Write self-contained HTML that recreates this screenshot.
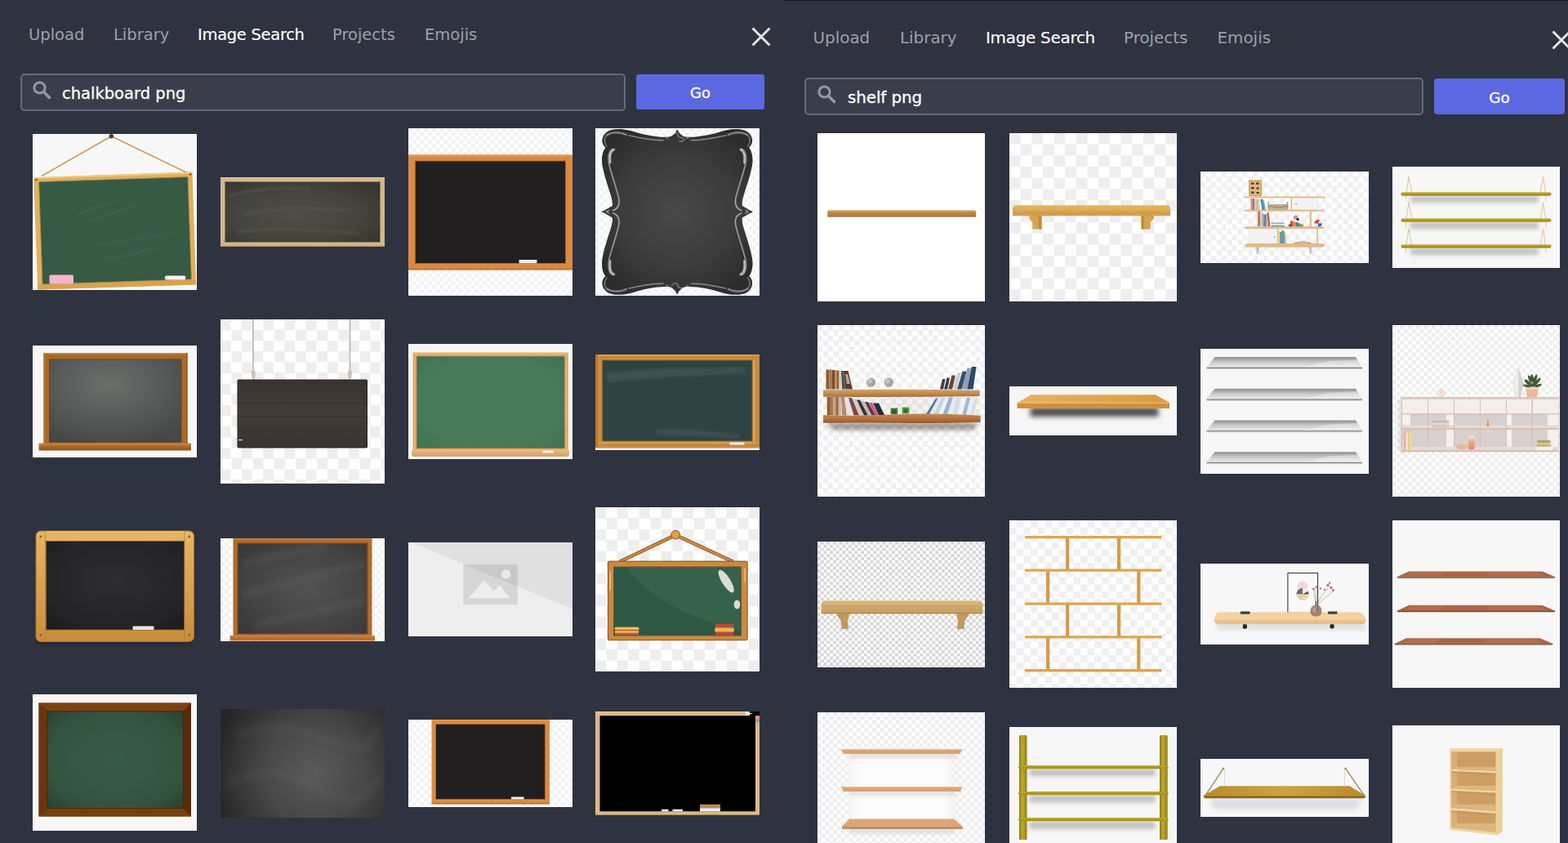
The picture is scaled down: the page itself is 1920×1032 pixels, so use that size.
<!DOCTYPE html>
<html lang="en">
<head>
<meta charset="utf-8">
<title>Image Search</title>
<style>
*{box-sizing:border-box;margin:0;padding:0}
html,body{width:1920px;height:1032px;overflow:hidden;background:#2f333f}
body{position:relative;font-family:"DejaVu Sans","Liberation Sans",sans-serif;color:#fff}
.panel{position:absolute;top:0;height:1032px;width:960px;background:#2f333f;overflow:hidden}
#pl{left:0}
#pr{left:960px;border-top:1px solid #141726}
.tabs{position:absolute;white-space:nowrap}
.tab{position:absolute;font-size:19.5px;line-height:24px;color:#9ba0ae;white-space:nowrap}
#pr .tab{font-size:19.9px}
.tab.on{color:#fff;-webkit-text-stroke:0.15px #fff}
.close{position:absolute;width:24px;height:24px}
.search{position:absolute;border:2px solid #656a79;border-radius:5px;background:#3a3e4a}
.search svg{position:absolute;left:11px;top:6px;width:26px;height:26px}
.search span{position:absolute;left:49px;top:10.5px;font-size:19.5px;line-height:24px;color:#fff;white-space:nowrap;-webkit-text-stroke:0.3px #fff}
#pr .search span{font-size:19.9px;left:51px;top:11px;letter-spacing:-.1px}
#pr .search svg{left:12px;top:6px}
.go{position:absolute;border-radius:3px;background:#5b68e1;color:#fff;text-align:center;font-size:18px;-webkit-text-stroke:0.3px #fff}
#pr .go{font-size:18.4px}
.t{position:absolute;overflow:hidden}
.t svg{position:absolute;left:0;top:0;width:100%;height:100%;display:block}
.w{background:#f7f7f7}
.ck13{background:repeating-conic-gradient(#fff 0 25%,#eeeeee 0 50%) 0 0/26.2px 26.2px}
.ck14{background:repeating-conic-gradient(#fff 0 25%,#eeeeee 0 50%) 0 0/27.3px 27.3px}
.ck13b{background:repeating-conic-gradient(#fff 0 25%,#eeeeee 0 50%) 0 0/26.8px 26.8px}
.ckf{background:repeating-conic-gradient(#fff 0 25%,#f2f2f2 0 50%) 0 0/9.6px 9.6px}
.ckf2{background:repeating-conic-gradient(#fff 0 25%,#eeeeee 0 50%) 0 0/9.6px 9.6px}
.ckm{background:repeating-conic-gradient(#fff 0 25%,#f0f0f0 0 50%) 0 0/12.9px 12.9px}
.ck9{background:repeating-conic-gradient(#f0f0f0 0 25%,#fff 0 50%) 0 0/17.4px 17.4px}
.ckd{background:repeating-conic-gradient(#d6d6d6 0 25%,#fff 0 50%) 0 0/7.6px 7.6px}
</style>
</head>
<body>
<!-- ================= LEFT PANEL ================= -->
<div class="panel" id="pl">
  <div class="tab" style="left:35px;top:31px">Upload</div>
  <div class="tab" style="left:139px;top:31px">Library</div>
  <div class="tab on" style="left:242px;top:31px;letter-spacing:-.3px">Image Search</div>
  <div class="tab" style="left:407px;top:31px">Projects</div>
  <div class="tab" style="left:520px;top:31px">Emojis</div>
  <svg class="close" style="left:920px;top:33px" viewBox="0 0 24 24"><path d="M1.5 1.5 L22.5 22.5 M22.5 1.5 L1.5 22.5" stroke="#e4e4e6" stroke-width="3" fill="none"/></svg>
  <div class="search" style="left:25px;top:90px;width:741px;height:46px">
    <svg viewBox="0 0 26 26"><circle cx="10.5" cy="9.5" r="6.6" fill="none" stroke="#9398a6" stroke-width="3"/><path d="M15.5 14.5 L22.5 21.5" stroke="#9398a6" stroke-width="3.6" stroke-linecap="round"/></svg>
    <span>chalkboard png</span>
  </div>
  <div class="go" style="left:779px;top:91px;width:157px;height:43px;line-height:45px">Go</div>
</div>

<!-- ================= RIGHT PANEL ================= -->
<div class="panel" id="pr">
  <div class="tab" style="left:35.5px;top:34px">Upload</div>
  <div class="tab" style="left:142px;top:34px">Library</div>
  <div class="tab on" style="left:247px;top:34px;letter-spacing:-.25px">Image Search</div>
  <div class="tab" style="left:416px;top:34px">Projects</div>
  <div class="tab" style="left:530.5px;top:34px">Emojis</div>
  <svg class="close" style="left:940px;top:36px" viewBox="0 0 24 24"><path d="M1.5 1.5 L22.5 22.5 M22.5 1.5 L1.5 22.5" stroke="#e4e4e6" stroke-width="3" fill="none"/></svg>
  <div class="search" style="left:25px;top:94px;width:758px;height:46px">
    <svg viewBox="0 0 26 26"><circle cx="10.5" cy="9.5" r="6.6" fill="none" stroke="#9398a6" stroke-width="3"/><path d="M15.5 14.5 L22.5 21.5" stroke="#9398a6" stroke-width="3.6" stroke-linecap="round"/></svg>
    <span>shelf png</span>
  </div>
  <div class="go" style="left:796px;top:95px;width:160px;height:44px;line-height:48px;border-radius:4px">Go</div>
</div>

<!-- ================= THUMBNAILS (page coordinates) ================= -->
<!--L1--><div class="t w" id="L1" style="left:40px;top:164px;width:201px;height:191px"><svg viewBox="40 164 201 191" preserveAspectRatio="none">
<path d="M136.3 166.8 L51 215.5 M136.3 166.8 L228 211" stroke="#c99e5e" stroke-width="1.7" fill="none"/>
<circle cx="136.3" cy="166.8" r="2.7" fill="#3b404b"/>
<path d="M41.2 217.2 L235.5 210.6 L240.2 348.6 L46.2 354.6 Z" fill="#dfb062"/>
<path d="M41.2 217.2 L235.5 210.6 L235.7 212.4 L41.3 219 Z" fill="#eecb86"/>
<path d="M46 348.6 L240 342.6 L240.2 348.6 L46.2 354.6 Z" fill="#d6a352"/>
<path d="M47.6 222.6 L230 216.6 L234.4 342 L52 348 Z" fill="#375a45"/>
<path d="M47.6 222.6 L230 216.6 L234.4 342 L52 348 Z" fill="none" stroke="#b98a3c" stroke-width=".8"/>
<path d="M95 262 L150 243 M110 270 L170 250 M120 300 L210 286 M125 318 L190 305" stroke="#4a705a" stroke-width="2.500" opacity=".3" fill="none" stroke-linecap="round" style="filter:blur(.8px)"/>
<rect x="60.5" y="336.5" width="29.5" height="11" rx="1.5" fill="#f5b5cf"/>
<rect x="201.8" y="337.5" width="25.5" height="5" rx="2" fill="#f6f6f4"/>
<circle cx="44.5" cy="220" r="1.3" fill="#7a4a1c"/><circle cx="233" cy="213.5" r="1.3" fill="#7a4a1c"/>
</svg></div>
<!--L2--><div class="t" id="L2" style="left:270px;top:217px;width:201px;height:85px;background:#3b3a36"><svg viewBox="270 217 201 85" preserveAspectRatio="none">
<defs><radialGradient id="l2g" cx=".45" cy=".55" r=".7"><stop offset="0" stop-color="#4e4d48"/><stop offset=".6" stop-color="#44433e"/><stop offset="1" stop-color="#363531"/></radialGradient></defs>
<rect x="270" y="217" width="201" height="85" fill="#d0b88f"/>
<rect x="270" y="217" width="201" height="1.2" fill="#ddc9a3"/><rect x="270" y="300.6" width="201" height="1.4" fill="#b39767"/>
<rect x="275.5" y="222.5" width="190" height="74" fill="url(#l2g)"/>
<path d="M280 240 Q330 226 380 232 M300 262 Q360 250 430 258 M290 284 Q350 276 440 286" stroke="#5a5954" stroke-width="5" opacity=".35" fill="none"/>
<rect x="275.5" y="222.5" width="190" height="74" fill="none" stroke="#8f7a55" stroke-width=".8"/>
</svg></div>
<!--L3--><div class="t ckf" id="L3" style="left:499.5px;top:157px;width:201px;height:205px"><svg viewBox="499.5 157 201 205" preserveAspectRatio="none">
<rect x="499.5" y="189.5" width="201" height="141" rx="1.5" fill="#d98b45"/>
<rect x="499.5" y="189.5" width="201" height="2" fill="#e39a57"/><rect x="499.5" y="328.2" width="201" height="2.3" fill="#c77a38"/>
<rect x="507.8" y="197" width="184.4" height="125.5" fill="#221f21"/>
<rect x="507.8" y="197" width="184.4" height="125.5" fill="none" stroke="#b36d2e" stroke-width=".8"/>
<rect x="635" y="318" width="22" height="4.3" rx="1" fill="#eeeeee"/>
</svg></div>
<!--L4--><div class="t ckf" id="L4" style="left:729px;top:157px;width:201px;height:205px"><svg viewBox="729 157 201 205" preserveAspectRatio="none">
<defs>
<radialGradient id="l4g" gradientUnits="userSpaceOnUse" cx="0" cy="0" r="115"><stop offset="0" stop-color="#484848"/><stop offset=".6" stop-color="#3c3c3c"/><stop offset="1" stop-color="#2c2c2c"/></radialGradient>
<path id="l4q" d="M-1,1 L-1,-100 L0,-100 Q4,-94 8.3,-91.9 C20,-90 40,-94 53,-98 C62,-101 78,-103.5 86.5,-97.5 C93.5,-92 93.5,-83 87.8,-78.5 C92.8,-73 93,-61 91.2,-54 C89.8,-46 84.5,-30 81,-19 C79.6,-14 79.2,-10 79.6,-7.3 L91.9,0 L91.9,1 Z"/>
<g id="l4w" fill="none" stroke="#e6e6e6" stroke-linecap="round">
<path d="M77,-77 C84,-78 85.5,-66 83,-56 C80,-44 74,-28 71.5,-16 C70.5,-10 71,-4 79,-1.5" stroke-width="1.1"/>
<path d="M77.5,-76 C82,-74 83,-68 82,-60" stroke-width="2"/>
<path d="M17,-87.5 C30,-87 48,-91 60,-93.5" stroke-width=".9"/>
<path d="M62,-94 C70,-98 82,-98 87,-93" stroke-width="2.2" stroke-dasharray="1.2 .8" stroke-linecap="butt"/>
<path d="M87,-93 C90,-89 89.5,-84 86,-80" stroke-width=".8"/>
<path d="M11,-89 l3,-4 M11,-92.5 l3,3" stroke-width=".7"/>
</g>
</defs>
<g transform="translate(829.3 259.2)">
<g fill="url(#l4g)">
<use href="#l4q"/><use href="#l4q" transform="scale(-1 1)"/><use href="#l4q" transform="scale(1 -1.005)"/><use href="#l4q" transform="scale(-1 -1.005)"/>
</g>
<g opacity=".88">
<use href="#l4w"/><use href="#l4w" transform="scale(-1 1)"/><use href="#l4w" transform="scale(1 -1.005)"/><use href="#l4w" transform="scale(-1 -1.005)"/>
<path d="M-7,-93 C-5,-98 2,-97 1,-93 C0,-90 6,-92 8,-89 C9,-86 4,-85 2,-87" fill="none" stroke="#e6e6e6" stroke-width=".8"/>
<path d="M-7,91 C-5,86 2,87 1,91 C0,94 6,92 8,95 C9,98 4,99 2,97" fill="none" stroke="#e6e6e6" stroke-width=".8"/>
<path d="M83,-2 l4,2 l-4,2 M-83,-2 l-4,2 l4,2" fill="none" stroke="#e6e6e6" stroke-width="1"/>
</g>
</g>
</svg></div>
<!--L5--><div class="t w" id="L5" style="left:40px;top:423px;width:201px;height:137px"><svg viewBox="40 423 201 137" preserveAspectRatio="none">
<defs><radialGradient id="l5g" cx=".45" cy=".3" r=".75"><stop offset="0" stop-color="#6b6f6c"/><stop offset=".5" stop-color="#585c5a"/><stop offset="1" stop-color="#444846"/></radialGradient>
<linearGradient id="l5w" x1="0" y1="0" x2="0" y2="1"><stop offset="0" stop-color="#c08a48"/><stop offset=".5" stop-color="#a8672a"/><stop offset="1" stop-color="#8f5520"/></linearGradient></defs>
<rect x="40" y="423" width="201" height="137" fill="#f8f6f6"/>
<rect x="53" y="432" width="176.5" height="111" fill="#a96a2b"/>
<rect x="53" y="432" width="176.5" height="1.5" fill="#c48f4e"/>
<rect x="53" y="432" width="1.5" height="111" fill="#c08845"/><rect x="228" y="432" width="1.5" height="111" fill="#8e5722"/>
<rect x="60.5" y="440" width="161.5" height="101.5" fill="url(#l5g)"/>
<rect x="60.5" y="440" width="161.5" height="101.5" fill="none" stroke="#6e421a" stroke-width="1"/>
<rect x="47.5" y="542.5" width="186.5" height="9" rx="1" fill="url(#l5w)"/>
</svg></div>
<!--L6--><div class="t ck13" id="L6" style="left:270px;top:391px;width:201px;height:201px"><svg viewBox="270 391 201 201" preserveAspectRatio="none">
<defs><linearGradient id="l6g" x1="0" y1="0" x2="0" y2="1"><stop offset="0" stop-color="#3b3331"/><stop offset=".5" stop-color="#453c39"/><stop offset="1" stop-color="#3a3230"/></linearGradient></defs>
<path d="M310 391 V456 M428.5 391 V456" stroke="#b9b3ad" stroke-width="1.6" fill="none"/>
<rect x="307.8" y="453" width="4.8" height="9.5" rx="1.8" fill="#c9c4be"/><rect x="426" y="453" width="4.8" height="9.5" rx="1.8" fill="#c9c4be"/>
<path d="M310.5 462 v8 M428.5 462 v8" stroke="#aaa49d" stroke-width="1.2"/>
<rect x="291" y="465" width="158.5" height="83" rx="1" fill="url(#l6g)"/>
<path d="M292 479 H449 M292 494 H449 M292 510 H449 M292 527 H449" stroke="#352d2b" stroke-width="1" opacity=".7"/>
<rect x="291" y="465" width="158.5" height="83" rx="1" fill="none" stroke="#2a2422" stroke-width="1"/>
<rect x="292" y="538" width="5" height="1.2" fill="#ddd"/>
</svg></div>
<!--L7--><div class="t w" id="L7" style="left:499.5px;top:421px;width:201px;height:141px"><svg viewBox="499.5 421 201 141" preserveAspectRatio="none">
<defs><radialGradient id="l7g" cx=".5" cy=".5" r=".75"><stop offset="0" stop-color="#487a5b"/><stop offset=".7" stop-color="#467859"/><stop offset="1" stop-color="#3e6f52"/></radialGradient>
<linearGradient id="l7w" x1="0" y1="0" x2="0" y2="1"><stop offset="0" stop-color="#e9bd84"/><stop offset="1" stop-color="#d6a066"/></linearGradient></defs>
<rect x="499.5" y="421" width="201" height="141" fill="#f6f6f6"/>
<rect x="505" y="431" width="190.5" height="120" rx="1.5" fill="#e0ad72"/>
<rect x="505" y="431" width="190.5" height="1.6" fill="#efcb98"/>
<rect x="509.5" y="436" width="181.5" height="113" fill="url(#l7g)"/>
<rect x="509.5" y="436" width="181.5" height="113" fill="none" stroke="#bf8c55" stroke-width=".8"/>
<rect x="503.5" y="550" width="193" height="9" rx="3" fill="url(#l7w)"/>
<rect x="663.5" y="551.5" width="14" height="3" rx="1" fill="#f1ede6"/>
</svg></div>
<!--L8--><div class="t" id="L8" style="left:729px;top:434px;width:201px;height:117px;background:#c98a3c"><svg viewBox="729 434 201 117" preserveAspectRatio="none">
<rect x="729" y="434" width="201" height="117" fill="#f3f1ec"/>
<rect x="729" y="434" width="201" height="114.5" rx="2" fill="#c78a3e"/>
<rect x="731" y="434" width="197" height="1.5" fill="#dba659"/>
<rect x="729" y="434" width="3" height="114" fill="#b9782f"/><rect x="922.5" y="441" width="2" height="100" fill="#dca85c"/>
<rect x="737.5" y="441" width="183.5" height="99" fill="#2f4344"/>
<path d="M741 457 C780 450 860 452 912 449 L912 457 C860 460 790 462 745 468 Z" fill="#4a6160" opacity=".5" style="filter:blur(1.500px)"/>
<path d="M803 527 C830 522 880 529 905 533 L905 537 C870 534 830 532 805 533 Z" fill="#4a6160" opacity=".45" style="filter:blur(1.500px)"/>
<rect x="737.5" y="441" width="183.5" height="99" fill="none" stroke="#9d6526" stroke-width=".8"/>
<rect x="733" y="541.5" width="193" height="1.2" fill="#e0ae63"/>
<rect x="893.5" y="541.5" width="18" height="3" rx=".8" fill="#f0eee9"/>
</svg></div>
<!--L9--><div class="t" id="L9" style="left:40px;top:646px;width:201px;height:146px"><svg viewBox="40 646 201 146" preserveAspectRatio="none">
<defs><radialGradient id="l9g" cx=".5" cy=".45" r=".75"><stop offset="0" stop-color="#2d2d2f"/><stop offset=".7" stop-color="#242426"/><stop offset="1" stop-color="#19191b"/></radialGradient>
<linearGradient id="l9w" x1="0" y1="0" x2="0" y2="1"><stop offset="0" stop-color="#e7b566"/><stop offset=".5" stop-color="#d9a150"/><stop offset="1" stop-color="#c98d3c"/></linearGradient></defs>
<rect x="45" y="653" width="192" height="135" rx="6" fill="#1c1e26" opacity=".6" style="filter:blur(2px)"/>
<rect x="44" y="650" width="193.5" height="135.5" rx="6" fill="url(#l9w)"/>
<rect x="44" y="650" width="193.5" height="135.5" rx="6" fill="none" stroke="#a9732c" stroke-width="1"/>
<path d="M55.5 651 V785 M225.8 651 V785" stroke="#b57f35" stroke-width=".8"/>
<rect x="56" y="650.6" width="169.5" height="1.2" fill="#f2cc88"/>
<rect x="56.5" y="662.5" width="169" height="108.5" fill="url(#l9g)"/>
<rect x="56.5" y="662.5" width="169" height="108.5" fill="none" stroke="#8a5a1e" stroke-width="1"/>
<rect x="162.5" y="766.5" width="26" height="4.5" rx="1" fill="#e6e6e6"/>
<g fill="#8f5f24"><circle cx="49.8" cy="657" r="1.4"/><circle cx="231.8" cy="657" r="1.4"/><circle cx="49.8" cy="777.5" r="1.4"/><circle cx="231.8" cy="777.5" r="1.4"/></g>
</svg></div>
<!--L10--><div class="t ckf" id="L10" style="left:270px;top:659px;width:201px;height:125.5px"><svg viewBox="270 659 201 125.5" preserveAspectRatio="none">
<defs><radialGradient id="l10g" cx=".55" cy=".5" r=".75"><stop offset="0" stop-color="#525252"/><stop offset=".6" stop-color="#434343"/><stop offset="1" stop-color="#353535"/></radialGradient></defs>
<rect x="285.5" y="659" width="170" height="120" fill="#b46a2c"/>
<rect x="285.5" y="659" width="170" height="1.5" fill="#c98448"/>
<rect x="291" y="665" width="159" height="111" fill="url(#l10g)"/>
<path d="M295 690 L400 668 M296 728 L446 690 M310 766 L446 735" stroke="#6a6a6a" stroke-width="9" opacity=".22" style="filter:blur(3px)"/>
<rect x="291" y="665" width="159" height="111" fill="none" stroke="#8c4e1c" stroke-width="1"/>
<rect x="281.5" y="778" width="177.5" height="6.5" fill="#b9702f"/>
<rect x="281.5" y="778" width="177.5" height="1.2" fill="#cf8c4d"/>
</svg></div>
<!--L11--><div class="t" id="L11" style="left:499.5px;top:664px;width:201px;height:115px;background:#eee"><svg viewBox="499.5 664 201 115" preserveAspectRatio="none">
<rect x="499.5" y="664" width="201" height="115" fill="#eeeeee"/>
<path d="M503 664 H700.5 V745.5 Z" fill="#e0e0e0"/>
<rect x="566.8" y="691" width="66.5" height="49.2" fill="#d6d6d6"/>
<path d="M566.8 691 H633.3 V718 Z" fill="#c9c9c9"/>
<circle cx="619" cy="703" r="5.8" fill="#eaeaea"/>
<path d="M573 732.5 L592.5 710 L604 723.5 L611.5 716.5 L624.5 732.5 Z" fill="#ededed"/>
</svg></div>
<!--L12--><div class="t ck13b" id="L12" style="left:729px;top:621px;width:201px;height:200.5px"><svg viewBox="729 621 201 200.5" preserveAspectRatio="none">
<defs><clipPath id="l12c"><rect x="751.5" y="694" width="156" height="84"/></clipPath></defs>
<path d="M827.2 655 L759 687.5 M827.2 655 L897.5 687.5" stroke="#8b4a22" stroke-width="4.2" fill="none"/>
<path d="M827.2 655 L759 687.5 M827.2 655 L897.5 687.5" stroke="#c98f42" stroke-width="2.6" fill="none"/>
<circle cx="827.2" cy="654.7" r="5.4" fill="#d8a445" stroke="#8b4a22" stroke-width="1"/>
<rect x="744.6" y="687.1" width="170.5" height="96.6" rx="1" fill="#c88c3f" stroke="#8b4a22" stroke-width="1"/>
<rect x="751.5" y="694" width="156" height="84" fill="#2d5844"/>
<g clip-path="url(#l12c)">
<path d="M768 694 C790 730 850 760 907.5 772 V694 Z" fill="#35614d"/>
<ellipse cx="889.2" cy="711.6" rx="5.2" ry="16" transform="rotate(-32 889.2 711.6)" fill="#d9dccf"/>
<ellipse cx="902.5" cy="740" rx="3.8" ry="5.6" fill="#d9dccf"/>
<rect x="752.5" y="767.8" width="30" height="10" rx="2" fill="#b65a3a"/><rect x="752.5" y="767.8" width="30" height="3" rx="1.5" fill="#ecc06a"/><rect x="753" y="772" width="29" height="3" rx="1.5" fill="#e4ad55"/>
<rect x="875.8" y="764" width="22.5" height="14" rx="1.5" fill="#b54b3c"/><rect x="875" y="768.5" width="24" height="5" rx="2" fill="#e9b650"/>
</g>
<rect x="751.5" y="694" width="156" height="84" fill="none" stroke="#7c4a22" stroke-width="1"/>
<path d="M747.3 700 V722 M912 696 V712" stroke="#f0cf8b" stroke-width="1.2" stroke-linecap="round"/>
</svg></div>
<!--L13--><div class="t w" id="L13" style="left:40px;top:850px;width:201px;height:167px"><svg viewBox="40 850 201 167" preserveAspectRatio="none">
<defs><radialGradient id="l13g" cx=".5" cy=".5" r=".72"><stop offset="0" stop-color="#3a5a48"/><stop offset=".7" stop-color="#34533f"/><stop offset="1" stop-color="#27402f"/></radialGradient></defs>
<rect x="40" y="850" width="201" height="167" fill="#f8f7f6"/>
<rect x="47.5" y="860.5" width="186.5" height="139" fill="#6f3a10"/>
<path d="M47.5 860.5 H234 L224.5 870.7 H58 Z" fill="#7a4214"/>
<path d="M47.5 999.5 H234 L224.5 989.5 H58 Z" fill="#74400f"/>
<path d="M47.5 860.5 L58 870.7 V989.5 L47.5 999.5 Z" fill="#6a360e"/>
<path d="M234 860.5 L224.5 870.7 V989.5 L234 999.5 Z" fill="#5a2b0a"/>
<rect x="58" y="870.7" width="166.5" height="118.8" fill="url(#l13g)"/>
<rect x="58" y="870.7" width="166.5" height="118.8" fill="none" stroke="#3a1f08" stroke-width="1" opacity=".7"/>
</svg></div>
<!--L14--><div class="t" id="L14" style="left:270px;top:868px;width:201px;height:133px;background:#444"><svg viewBox="270 868 201 133" preserveAspectRatio="none">
<defs><radialGradient id="l14g" gradientUnits="userSpaceOnUse" cx="385" cy="945" r="125"><stop offset="0" stop-color="#5a5a5a"/><stop offset=".5" stop-color="#474747"/><stop offset="1" stop-color="#262626"/></radialGradient></defs>
<rect x="270" y="868" width="201" height="133" fill="url(#l14g)"/>
<path d="M290 900 Q340 880 400 905 T460 890 M280 960 Q340 930 390 965 T465 950" stroke="#6a6a6a" stroke-width="10" fill="none" opacity=".18" style="filter:blur(4px)"/>
</svg></div>
<!--L15--><div class="t ckf" id="L15" style="left:499.5px;top:880.5px;width:201px;height:107px"><svg viewBox="499.5 880.5 201 107" preserveAspectRatio="none">
<rect x="528" y="880.5" width="144.5" height="103.5" rx="1.5" fill="#d98b45"/>
<rect x="528" y="880.5" width="144.5" height="1.5" fill="#e39a57"/><rect x="528" y="982" width="144.5" height="2" fill="#c77a38"/>
<rect x="533" y="886" width="134" height="92" fill="#221f21"/>
<rect x="533" y="886" width="134" height="92" fill="none" stroke="#b36d2e" stroke-width=".8"/>
<rect x="625.5" y="975" width="15.5" height="3" rx=".8" fill="#eeeeee"/>
</svg></div>
<!--L16--><div class="t" id="L16" style="left:729px;top:870.75px;width:201px;height:126.75px;background:#000"><svg viewBox="729 870.75 201 126.75" preserveAspectRatio="none">
<rect x="729" y="870.75" width="201" height="126.75" fill="#d9b989"/>
<rect x="729" y="870.75" width="201" height="1.2" fill="#e8cfa6"/>
<rect x="734.5" y="876" width="190.5" height="117" fill="#000"/>
<rect x="918" y="870.75" width="12" height="5.5" fill="#000"/>
<path d="M913 871.5 L922 873.3 L913 875.6 Z" fill="#f4efe6"/>
<rect x="925" y="876" width="5" height="4" fill="#e79a8c"/><rect x="925" y="880" width="5" height="4" fill="#9a9a9a"/>
<rect x="810" y="990.5" width="8.5" height="2.5" fill="#f1ece4"/><rect x="823.5" y="990.5" width="12.5" height="2.5" fill="#f1ece4"/>
<rect x="857" y="984.5" width="25" height="4.5" fill="#b98a5a"/><rect x="857" y="989" width="25" height="4" fill="#f3eee6"/>
</svg></div>

<!--R1--><div class="t" id="R1" style="left:1001px;top:163px;width:205.25px;height:205.75px;background:#fff"><svg viewBox="1001 163 205.25 205.75" preserveAspectRatio="none">
<defs><linearGradient id="r1g" x1="0" y1="0" x2="0" y2="1"><stop offset="0" stop-color="#c59a5d"/><stop offset=".25" stop-color="#b98a4c"/><stop offset="1" stop-color="#a97a3e"/></linearGradient></defs>
<path d="M1014.5 257.5 H1193.5 L1195.2 259.3 V265.8 H1013.2 V259.3 Z" fill="url(#r1g)"/>
<path d="M1014.5 257.5 H1193.5 L1195.2 259.3 H1013.2 Z" fill="#cfa76c"/>
</svg></div>
<!--R2--><div class="t ck14" id="R2" style="left:1235.5px;top:163px;width:205.75px;height:205.75px"><svg viewBox="1235.5 163 205.75 205.75" preserveAspectRatio="none">
<defs><linearGradient id="r2g" x1="0" y1="0" x2="0" y2="1"><stop offset="0" stop-color="#e3b564"/><stop offset=".55" stop-color="#dcab57"/><stop offset=".56" stop-color="#d09c48"/><stop offset="1" stop-color="#d4a04d"/></linearGradient></defs>
<path d="M1260 263 H1275 V280.5 H1263.8 V272 L1260 268 Z" fill="#d6a24e"/>
<path d="M1397 263 H1412.5 V268 L1408.2 272 V280.5 H1397 Z" fill="#d6a24e"/>
<path d="M1271.500 264.300 H1275 V280.500 H1271.500 Z M1397 264.300 H1400.500 V280.500 H1397 Z" fill="#c08c3c"/>
<path d="M1241.5 251.3 H1430.5 L1432.6 254.5 V264.3 H1239.5 V254.5 Z" fill="url(#r2g)"/>
</svg></div>
<!--R3--><div class="t ckm" id="R3" style="left:1470px;top:210px;width:205.5px;height:112px"><svg viewBox="1470 210 205.5 112" preserveAspectRatio="none">
<rect x="1529" y="220.3" width="16.2" height="19.8" fill="#d6a465"/><rect x="1530.6" y="222" width="13" height="16.500" fill="#e1b77d"/>
<g fill="#3d3a36"><rect x="1532" y="223.500" width="3.600" height="2.200"/><rect x="1538" y="223.500" width="3.600" height="2.200"/><rect x="1532" y="229" width="3.600" height="2.200"/><rect x="1538.500" y="229.500" width="3" height="2"/><rect x="1532" y="234.500" width="3.600" height="2.400"/><rect x="1538.500" y="235" width="3.200" height="2"/></g>
<g fill="#f3f3f2" stroke="#dcdad6" stroke-width=".5"><rect x="1582" y="242.200" width="32" height="14.700"/><rect x="1529.800" y="280.300" width="34.200" height="18.500"/></g>
<circle cx="1587" cy="249.800" r=".8" fill="#6a6a6a"/><circle cx="1560.600" cy="290" r=".8" fill="#6a6a6a"/>
<g fill="#e1bb8b"><rect x="1603.700" y="258" width="2.200" height="20"/><rect x="1612.300" y="279.500" width="1.800" height="19"/><rect x="1580.500" y="242" width="1.500" height="15"/><rect x="1564" y="280" width="1.400" height="18.500"/><rect x="1539.500" y="258" width="1.400" height="19.500"/></g>
<g><rect x="1531.500" y="243" width="2.600" height="14" fill="#c98e9b"/><rect x="1534.100" y="243" width="2" height="14" fill="#b9656a"/><rect x="1536.100" y="243.500" width="2.200" height="13.500" fill="#d9cdb4"/><rect x="1538.300" y="244" width="2.600" height="13" fill="#a9c3a4"/><rect x="1540.900" y="244.500" width="2" height="12.500" fill="#e6dcc0"/><path d="M1543.500 244 h2.600 l2.800 13 h-3.400 z" fill="#4e7fb3"/><path d="M1546 244.500 h1.600 l2.400 12.500 h-1.800 z" fill="#88a9c9"/></g>
<g><rect x="1540.800" y="259" width="2" height="18.500" fill="#b4533e"/><rect x="1542.800" y="260" width="2.400" height="17.500" fill="#d9ccb0"/><rect x="1545.200" y="261" width="2" height="16.500" fill="#9fb8b0"/><rect x="1547.200" y="262.500" width="2.800" height="15" fill="#5b88b8"/><rect x="1550" y="261.500" width="1.800" height="16" fill="#cf94a0"/><path d="M1551.800 260 h1.800 l1.800 17.500 h-2.600 z" fill="#a0684a"/></g>
<path d="M1552.600 256.900 L1553.600 250 L1577 250 L1577.600 256.900 Z" fill="#bfae96"/><path d="M1553.200 247 v8 M1576.500 247 v8" stroke="#8f8f95" stroke-width="1.200"/><path d="M1554 252 Q1565 255.500 1576 252" stroke="#9b7f5e" stroke-width="1" fill="none"/>
<rect x="1556.400" y="272.400" width="15.800" height="2" fill="#8fb5d6"/><rect x="1557" y="274.400" width="15.200" height="1.600" fill="#e9e4da"/><rect x="1556.400" y="276" width="16.400" height="1.800" fill="#5e90c0"/>
<g><circle cx="1586.500" cy="266" r="2.600" fill="#cf8f9a"/><circle cx="1589" cy="268.500" r="1.800" fill="#3a3030"/><rect x="1580" y="270.500" width="3.600" height="7" fill="#d24d3a"/><rect x="1583.600" y="271.500" width="3" height="6" fill="#e38a2c"/><rect x="1578" y="274.500" width="3.400" height="3.400" fill="#5a3f9a"/><rect x="1586.600" y="272" width="2.400" height="5.800" fill="#3d7bc4"/><rect x="1589" y="273" width="3" height="5" fill="#3faa4c"/><rect x="1592" y="274.500" width="3.800" height="3.500" fill="#e2623a"/></g>
<circle cx="1614" cy="273.600" r="4.800" fill="#e9e6e2"/><path d="M1609.300 273 A4.800 4.800 0 0 1 1616 269.200 L1613.500 274 Z" fill="#cf4a3a"/><path d="M1614 278.400 A4.800 4.800 0 0 0 1618.800 273.600 L1614 273.600 Z" fill="#3d5f9f"/>
<g><path d="M1565.300 282.500 h1.800 v16.500 h-1.800 z" fill="#e4d48a"/><path d="M1567.100 284 h2 v15 h-2 z" fill="#6aa078"/><path d="M1569.100 283 Q1571 281 1572.500 283.500 l1.200 15.500 h-4.600 z" fill="#5d95c3"/><path d="M1572.800 285 l1.400 -.5 l1.200 14.500 h-1.600 z" fill="#ddc070"/></g>
<ellipse cx="1595.300" cy="297.600" rx="10.600" ry="2" fill="#b98c62"/><ellipse cx="1595.300" cy="296.900" rx="8.500" ry="1.200" fill="#d7b48e"/>
<g fill="#e0b98a"><path d="M1524.500 240.600 H1622 L1623.200 241.400 L1622 242.300 H1524.500 L1523.300 241.400 Z"/><path d="M1524 256.800 H1620.500 L1621.700 257.700 L1620.500 258.700 H1524 L1522.800 257.700 Z"/><path d="M1526 277.200 H1620 L1622.200 278.700 L1620 280.100 H1526 L1523.300 278.700 Z"/><path d="M1527 298.100 H1619 L1623.300 300.500 L1619 302.800 H1527 L1523.300 300.500 Z"/></g>
<path d="M1538.200 302.800 h3.700 l-.6 8 h-2.500 z M1603.100 302.800 h3 l-.4 8 h-2 z" fill="#b9bcc2"/>
</svg></div>
<!--R4--><div class="t w" id="R4" style="left:1705px;top:204px;width:205px;height:124px"><svg viewBox="1705 204 205 124" preserveAspectRatio="none">
<rect x="1705" y="204" width="205" height="124" fill="#f7f7f6"/>
<g fill="#8c8c88" opacity=".5" style="filter:blur(2.500px)"><rect x="1727" y="240" width="157" height="8"/><rect x="1727" y="272" width="157" height="8"/><rect x="1727" y="304" width="157" height="8"/></g>
<g stroke="#d6c7a0" stroke-width="1" fill="none"><path d="M1721.5 240 L1725 216 L1729.5 240 M1721.5 272 L1725 248 L1729.5 272 M1721.5 304 L1725 280 L1729.5 304 M1721.5 240 V246 M1721.5 272 V278 M1721.5 304 V310"/><path d="M1885.5 240 L1889.5 216 L1893 240 M1885.5 272 L1889.5 248 L1893 272 M1885.5 304 L1889.5 280 L1893 304 M1893 240 V246 M1893 272 V278 M1893 304 V310"/></g>
<g fill="#a8921c"><rect x="1715.5" y="235.6" width="184" height="4.2" rx="2"/><rect x="1715.5" y="267.6" width="184" height="4.2" rx="2"/><rect x="1715.5" y="299.6" width="184" height="4.2" rx="2"/></g>
<g fill="#c2ac35"><rect x="1717" y="235.8" width="181" height="1.2" rx=".6"/><rect x="1717" y="267.8" width="181" height="1.2" rx=".6"/><rect x="1717" y="299.8" width="181" height="1.2" rx=".6"/></g>
</svg></div>
<!--R5--><div class="t ckm" id="R5" style="left:1001px;top:398px;width:205.25px;height:209.5px"><svg viewBox="1001 398 205.25 209.5" preserveAspectRatio="none">
<defs><linearGradient id="r5a" x1="0" y1="0" x2="0" y2="1"><stop offset="0" stop-color="#d3a46b"/><stop offset=".5" stop-color="#c28d56"/><stop offset="1" stop-color="#a8703c"/></linearGradient>
<linearGradient id="r5b" x1="0" y1="0" x2="0" y2="1"><stop offset="0" stop-color="#c58952"/><stop offset=".5" stop-color="#b5733f"/><stop offset="1" stop-color="#96562a"/></linearGradient></defs>
<path d="M1012 518 H1198 L1192 526 H1020 Z" fill="#3a3028" opacity=".55" style="filter:blur(3px)"/>
<path d="M1010 478 H1200 V520 H1010 Z" fill="#5a4a3c" opacity=".06" style="filter:blur(3px)"/>
<!-- top-left books -->
<g><rect x="1011.500" y="452.500" width="4" height="24" fill="#8a5a32"/><rect x="1015.500" y="452.500" width="3" height="24" fill="#a9794a"/><rect x="1018.500" y="453" width="3.500" height="23.500" fill="#7a4c2a"/><rect x="1022" y="453" width="2.500" height="23.500" fill="#b98f62"/><rect x="1024.500" y="453.500" width="3" height="23" fill="#8f5f36"/><rect x="1027.500" y="454" width="2.500" height="22.500" fill="#d6cbb8"/><path d="M1030 454 h3 l2.500 22.500 h-4.500 z" fill="#4d5a50"/><path d="M1033 454 h5.500 l5.500 22.500 h-8.500 z" fill="#5a3a30"/><path d="M1035 458 h3 l3 12 h-4 z" fill="#b9a896"/></g>
<!-- spheres -->
<circle cx="1066.500" cy="468.200" r="5.600" fill="#a5a5a5"/><circle cx="1065" cy="466.500" r="3" fill="#c9c9c9" opacity=".8"/><circle cx="1088.300" cy="468.200" r="5.600" fill="#a5a5a5"/><circle cx="1086.800" cy="466.500" r="3" fill="#c9c9c9" opacity=".8"/>
<!-- top-right books -->
<g><path d="M1151 476.500 l3 -12.500 h3.500 l-2.500 12.500 z" fill="#4a3a3a"/><path d="M1156 476.500 l3.500 -14 h3.500 l-3 14 z" fill="#2f3d55"/><path d="M1161 476.500 l4.500 -17 h4.500 l-4 17 z" fill="#6a4532"/><path d="M1166.500 476.500 l6 -20 h4 l-5 20 z" fill="#c7ccd6"/><path d="M1172 476.500 l6.500 -22 h5 l-5.500 22 z" fill="#3a4f6e"/><path d="M1178.500 476.500 l6 -26 h5.500 l-5 26 z" fill="#8aa0bd"/><path d="M1184.500 476.500 l5.500 -27.500 h5.500 l-4 27.500 z" fill="#2f4562"/></g>
<!-- bottom-left books -->
<g><rect x="1012.800" y="486" width="4" height="22.500" fill="#8c5d36"/><rect x="1016.800" y="486" width="3.500" height="22.500" fill="#a77a4e"/><rect x="1020.300" y="486" width="3" height="22.500" fill="#c2a57e"/><rect x="1023.300" y="486" width="3.500" height="22.500" fill="#9a6a44"/><rect x="1026.800" y="486" width="3" height="22.500" fill="#cdb79a"/><path d="M1030 486 h4 l3 22.500 h-6 z" fill="#b48a74"/><path d="M1034 486 h4.500 l7 22.500 h-8.500 z" fill="#e4e2e4"/><path d="M1039 487 h4 l9 21.500 h-6.500 z" fill="#7a4a48"/><path d="M1044 488 h4 l10 20.500 h-6 z" fill="#d9c7c4"/><path d="M1049 489.500 h4 l10 19 h-5 z" fill="#2f3440"/><path d="M1054 491 h4 l10 17.500 h-5 z" fill="#c9b8a4"/><path d="M1059 492 h4 l9 16.500 h-4.500 z" fill="#4c3a44"/><path d="M1064 493 h4 l8 15.500 h-4 z" fill="#c85a8a"/><path d="M1069 493.500 h7 l7 14.500 h-7 z" fill="#2a2c30"/></g>
<!-- cubes -->
<rect x="1090.600" y="499.500" width="8.600" height="8" rx="1" fill="#4c7a3c"/><rect x="1092.600" y="501.500" width="4.500" height="4.500" fill="#2f5a28"/><rect x="1104.500" y="498.500" width="9" height="8" rx="1" fill="#5a9a4a"/><rect x="1106.700" y="500.500" width="4.500" height="4.500" fill="#2f6a2c"/>
<!-- bottom-right books -->
<g><path d="M1133 508.500 l13 -21 h4 l-11 21 z" fill="#5a7496"/><path d="M1137 508.500 l12 -22 h5 l-10.500 22 z" fill="#e6e8ee"/><path d="M1143 508.500 l10 -22 h5 l-9 22 z" fill="#c9d4e4"/><path d="M1148.500 508.500 l9 -22 h5 l-8 22 z" fill="#f0f0f4"/><path d="M1154 508.500 l8 -22 h5 l-7 22 z" fill="#9cb4d2"/><path d="M1160 508.500 l7 -22 h5 l-6 22 z" fill="#e9e9ef"/><path d="M1166 508.500 l6 -22 h5 l-5 22 z" fill="#d5dbe8"/><path d="M1172 508.500 l6 -22 h5 l-5 22 z" fill="#f2f2f6"/><path d="M1178 508.500 l6 -22 h4 l-5 22 z" fill="#a7b7cf"/><path d="M1183 508.500 l6 -22 h4.500 l-5.500 22 z" fill="#ecebf0"/><path d="M1188 508.500 l6 -22 h3.500 l-6 22 z" fill="#d9dde8"/></g>
<path d="M1008 477.300 Q1100 475.800 1199.500 477.800 V485 Q1100 486.500 1008 485.600 Z" fill="url(#r5a)"/>
<path d="M1008 508.300 Q1060 509.500 1100 507.300 T1200.600 508.800 V516.800 Q1150 518.500 1100 517.800 T1008 517.800 Z" fill="url(#r5b)"/>
</svg></div>
<!--R6--><div class="t w" id="R6" style="left:1235.5px;top:472.5px;width:205.75px;height:60.5px"><svg viewBox="1235.5 472.5 205.75 60.5" preserveAspectRatio="none">
<defs><linearGradient id="r6g" x1="0" y1="0" x2="1" y2="0"><stop offset="0" stop-color="#e9b56a"/><stop offset=".5" stop-color="#e3a855"/><stop offset="1" stop-color="#d99b46"/></linearGradient></defs>
<rect x="1235.5" y="472.5" width="205.75" height="60.5" fill="#f6f6f6"/>
<path d="M1261 498 H1418 V509.500 H1261 Z" fill="#2e2e2e" opacity=".85" style="filter:blur(3px)"/>
<path d="M1262 482.800 H1414.500 L1431.500 492.500 H1245 Z" fill="url(#r6g)"/>
<path d="M1259 485.5 H1417 M1254 488.5 H1424" stroke="#d99a47" stroke-width=".8" opacity=".7"/>
<rect x="1245" y="492.5" width="186.5" height="7" fill="#d48f3c"/>
<rect x="1245" y="492.3" width="186.5" height="1" fill="#f0c27d"/>
</svg></div>
<!--R7--><div class="t w" id="R7" style="left:1470px;top:427px;width:205.5px;height:153px"><svg viewBox="1470 427 205.5 153" preserveAspectRatio="none">
<defs><linearGradient id="r7g" x1="0" y1="0" x2="0" y2="1"><stop offset="0" stop-color="#8f8f8f"/><stop offset=".45" stop-color="#c4c4c4"/><stop offset="1" stop-color="#ececec"/></linearGradient>
<g id="r7s"><path d="M10 0 H182.5 L190.5 12.5 H0 Z" fill="url(#r7g)"/><path d="M120 12.5 L150 5 L185 3.5 L190.5 12.5 Z" fill="#fff" opacity=".35"/><rect x="0" y="12.5" width="190.5" height="1.6" fill="#8a8a8a"/><rect x="0" y="14" width="190.5" height="1" fill="#c9c9c9"/></g></defs>
<rect x="1470" y="427" width="205.5" height="153" fill="#f7f7f7"/>
<use href="#r7s" x="1477.5" y="437"/><use href="#r7s" x="1477.5" y="475.8"/><use href="#r7s" x="1477.5" y="514.4"/><use href="#r7s" x="1477.5" y="553.2"/>
</svg></div>
<!--R8--><div class="t ckf2" id="R8" style="left:1705px;top:398px;width:205px;height:209.5px"><svg viewBox="1705 398 205 209.5" preserveAspectRatio="none">
<defs><linearGradient id="r8v" x1="0" y1="0" x2="0" y2="1"><stop offset="0" stop-color="#f2ede9"/><stop offset=".5" stop-color="#eda58a"/><stop offset="1" stop-color="#e88560"/></linearGradient></defs>
<rect x="1713" y="488" width="8" height="66" fill="#8a8a8a" opacity=".25" style="filter:blur(2.500px)"/>
<!-- top items -->
<circle cx="1764.500" cy="481.100" r="4.700" fill="#f4e6e0" stroke="#e7cfc4" stroke-width=".8"/><path d="M1764.500 478.500 v2.600 l1.800 1" stroke="#d9a999" stroke-width=".6" fill="none"/>
<path d="M1859.300 450.500 L1866 470 L1861.500 486.200 H1857 L1852.600 470 Z" fill="#efedea"/><path d="M1859.300 450.500 L1866 470 L1861.500 486.200 H1859.300 Z" fill="#d6d2ce"/><path d="M1859.300 450.500 L1852.600 470 L1857 486.200" fill="none" stroke="#d9d5d1" stroke-width=".7"/>
<g fill="#3f5a36"><ellipse cx="1876.500" cy="466" rx="2.200" ry="8" transform="rotate(-8 1876.500 466)"/><ellipse cx="1871.500" cy="469" rx="2" ry="6.500" transform="rotate(-48 1871.500 469)"/><ellipse cx="1881.500" cy="468" rx="2" ry="7" transform="rotate(42 1881.500 468)"/><ellipse cx="1874" cy="465" rx="1.800" ry="6" transform="rotate(-25 1874 465)"/><ellipse cx="1879.500" cy="464.500" rx="1.800" ry="6.500" transform="rotate(22 1879.500 464.500)"/><ellipse cx="1869.500" cy="472.500" rx="1.600" ry="4.500" transform="rotate(-75 1869.500 472.500)"/><ellipse cx="1883.500" cy="472" rx="1.600" ry="4.500" transform="rotate(72 1883.500 472)"/></g>
<circle cx="1876" cy="468.500" r="1.500" fill="#d9865a"/>
<path d="M1867.800 474.600 H1884.200 L1882 486.200 H1870 Z" fill="#ecb79c"/><path d="M1867.800 474.600 H1884.200 L1883.700 477 H1868.300 Z" fill="#f3cdb8"/>
<!-- cabinet -->
<rect x="1715.900" y="486.200" width="192.700" height="67.100" fill="#d9c0b1"/>
<rect x="1715.900" y="486.200" width="192.700" height="2" fill="#d6c7bf"/>
<g fill="#f4eeea"><rect x="1717" y="488.700" width="31" height="17.400"/><rect x="1749" y="488.700" width="31" height="17.400"/><rect x="1781" y="488.700" width="31" height="17.400"/><rect x="1813" y="488.700" width="31" height="17.400"/><rect x="1845" y="488.700" width="30.500" height="17.400"/><rect x="1877" y="488.700" width="31" height="17.400"/></g>
<g fill="#d6d0cf"><rect x="1717" y="507.600" width="31" height="16.400"/><rect x="1749" y="507.600" width="31" height="16.400"/><rect x="1781" y="507.600" width="31" height="16.400"/><rect x="1813" y="507.600" width="31" height="16.400"/><rect x="1845" y="507.600" width="30.500" height="16.400"/><rect x="1877" y="507.600" width="31" height="16.400"/>
<rect x="1717" y="526.100" width="31" height="24.500"/><rect x="1749" y="526.100" width="31" height="24.500"/><rect x="1781" y="526.100" width="31" height="24.500"/><rect x="1813" y="526.100" width="31" height="24.500"/><rect x="1845" y="526.100" width="30.500" height="24.500"/><rect x="1877" y="526.100" width="31" height="24.500"/></g>
<g fill="#f5f1ee"><rect x="1717" y="507.600" width="10" height="16.400"/><rect x="1771" y="507.600" width="9" height="16.400"/><rect x="1845" y="507.600" width="6" height="16.400"/><rect x="1895" y="507.600" width="13" height="16.400"/><rect x="1771" y="526.100" width="9" height="24.500"/><rect x="1845" y="526.100" width="6" height="24.500"/><rect x="1895" y="526.100" width="13" height="24.500"/></g>
<g fill="#e6dcd6"><rect x="1717" y="520.500" width="31" height="3.500"/><rect x="1749" y="520.500" width="31" height="3.500"/><rect x="1781" y="520.500" width="31" height="3.500"/><rect x="1813" y="520.500" width="31" height="3.500"/><rect x="1845" y="520.500" width="30.500" height="3.500"/><rect x="1877" y="520.500" width="31" height="3.500"/><rect x="1717" y="547" width="191" height="3.600"/></g>
<!-- items -->
<rect x="1753.800" y="514.800" width="20.500" height="2.600" fill="#cbb9a8"/><rect x="1755" y="517.400" width="19.500" height="3" fill="#e3d6cb"/><rect x="1754.500" y="520.400" width="20" height="3" fill="#d9c9bb"/>
<path d="M1822 512.600 L1823.800 522.800 H1820 Z" fill="#e98a5c"/><rect x="1819" y="522" width="14" height="1.600" fill="#f1d9c6"/>
<rect x="1719.200" y="528" width="2.600" height="23" fill="#e9b3a4"/><rect x="1721.800" y="529.500" width="2" height="21.500" fill="#f3ece6"/><rect x="1723.800" y="530" width="2.400" height="21" fill="#e8cf7a"/><rect x="1726.200" y="529" width="2" height="22" fill="#f0d9a0"/>
<rect x="1797.800" y="533.200" width="7.600" height="17" rx="2.500" fill="url(#r8v)"/><ellipse cx="1790" cy="547" rx="7" ry="3.200" fill="#e5b79c"/><circle cx="1794" cy="546" r="2" fill="#e9c46a"/>
<rect x="1882.500" y="539.200" width="16" height="2.600" fill="#a89868"/><rect x="1882" y="541.800" width="17" height="2.600" fill="#d9c88a"/><rect x="1881.400" y="544.400" width="18" height="2.400" fill="#c4b07c"/><rect x="1881.400" y="546.800" width="19.500" height="4.300" fill="#f4f1ee"/>
</svg></div>
<!--R9--><div class="t ckd" id="R9" style="left:1001px;top:663px;width:205.25px;height:154px"><svg viewBox="1001 663 205.25 154" preserveAspectRatio="none">
<defs><linearGradient id="r9g" x1="0" y1="0" x2="0" y2="1"><stop offset="0" stop-color="#d8b882"/><stop offset=".3" stop-color="#cfab70"/><stop offset="1" stop-color="#c39e62"/></linearGradient></defs>
<path d="M1025 750 H1039.5 V756 C1037 759 1038.5 763 1039 770 H1030 C1031 764 1030 758 1025 754 Z" fill="#c09a5c"/>
<path d="M1186 750 H1171.5 V756 C1174 759 1172.500 763 1172 770 H1181 C1180 764 1181 758 1186 754 Z" fill="#c09a5c"/>
<path d="M1008 735.5 H1200 L1203.3 739 V751.3 H1005.8 V739 Z" fill="url(#r9g)"/>
<path d="M1009 739.2 H1200" stroke="#e3c896" stroke-width=".8"/>
<path d="M1005.8 750.6 H1203.3" stroke="#ad8748" stroke-width="1.2"/>
</svg></div>
<!--R10--><div class="t ck9" id="R10" style="left:1235.5px;top:637px;width:205.75px;height:205px"><svg viewBox="1235.5 637 205.75 205" preserveAspectRatio="none">
<g fill="#d39b4a"><rect x="1304.5" y="658" width="4.2" height="40"/><rect x="1367.5" y="658" width="4.2" height="40"/><rect x="1280.5" y="698" width="4.2" height="41"/><rect x="1391.7" y="698" width="4.2" height="41"/><rect x="1304.5" y="739" width="4.2" height="41"/><rect x="1367.5" y="739" width="4.2" height="41"/><rect x="1280.5" y="780" width="4.2" height="41"/><rect x="1391.7" y="780" width="4.2" height="41"/></g>
<g fill="#dca650"><rect x="1254.5" y="655.9" width="167.5" height="3.3" rx=".6"/><rect x="1254.5" y="696.5" width="167.5" height="3.3" rx=".6"/><rect x="1254.5" y="737.4" width="167.5" height="3.3" rx=".6"/><rect x="1254.5" y="778.3" width="167.5" height="3.3" rx=".6"/><rect x="1254.5" y="819.1" width="167.5" height="3.3" rx=".6"/></g>
</svg></div>
<!--R11--><div class="t w" id="R11" style="left:1470px;top:690px;width:205.5px;height:99px"><svg viewBox="1470 690 205.5 99" preserveAspectRatio="none">
<rect x="1470" y="690" width="205.500" height="99" fill="#f7f7f7"/>
<path d="M1490 764 H1672 V770 H1490 Z" fill="#8a8a8a" opacity=".3" style="filter:blur(3px)"/>
<rect x="1576.900" y="701.500" width="36.700" height="48.800" fill="#f9f9f9" stroke="#3b3b3b" stroke-width="1.100"/>
<circle cx="1595" cy="717.900" r="6.400" fill="#ecd9d9"/>
<circle cx="1595" cy="727.500" r="7.500" fill="#f3efe9"/>
<path d="M1595 727.500 V720 A7.500 7.500 0 0 0 1587.500 727.500 Z" fill="#6b6b6b"/><path d="M1595 727.500 H1587.500 A7.500 7.500 0 0 0 1595 735 Z" fill="#e4cfb2"/><path d="M1595 727.500 V735 A7.500 7.500 0 0 0 1602.500 727.500 Z" fill="#ebd98c"/><path d="M1595 727.500 L1601.500 723.800 A7.500 7.500 0 0 1 1602.500 727.500 Z" fill="#555"/>
<path d="M1491.500 749.500 H1663 Q1671 750.500 1672.500 759 H1487 Q1487.500 751 1491.500 749.500 Z" fill="#f4d1a0"/>
<path d="M1487 759 H1672.500 Q1672.500 763.500 1668 764.200 H1491 Q1487 763.500 1487 759 Z" fill="#eabf87"/>
<rect x="1518.800" y="748.400" width="11.800" height="3.300" rx=".6" fill="#3f3f41"/><rect x="1626.100" y="748.400" width="11.300" height="3.300" rx=".6" fill="#3f3f41"/>
<path d="M1522.300 764.200 h4.200 l.6 3.500 a2.300 1.800 0 0 1 -5.400 0 z M1629 764.200 h4.200 l.6 3.200 a2.300 1.800 0 0 1 -5.400 0 z" fill="#252527"/>
<g stroke="#9a8a7a" stroke-width=".6" fill="none"><path d="M1611.500 742 L1608.500 721 M1611.500 742 L1612 719 M1611.500 742 Q1618 728 1626 720 M1611.500 742 Q1622 732 1632 724"/></g>
<g fill="#b9709a"><circle cx="1608.500" cy="721" r="1.500"/><circle cx="1612" cy="718.500" r="1.400"/><circle cx="1626" cy="716.500" r="1.800"/><circle cx="1630" cy="719.500" r="1.700"/><circle cx="1632.500" cy="722.500" r="1.500"/><circle cx="1622" cy="722" r="1.300"/><circle cx="1617" cy="720.500" r="1.200"/><circle cx="1628" cy="713.800" r="1.200"/></g>
<path d="M1610.300 736 h2.600 v4.500 q5.600 1.500 5.600 7.500 q0 6.500 -7 6.700 q-7 -.2 -7 -6.700 q0 -6 5.800 -7.500 z" fill="#8f6f62" opacity=".82"/>
<ellipse cx="1609.500" cy="747" rx="2" ry="3.500" fill="#c2aca4" opacity=".6"/>
</svg></div>
<!--R12--><div class="t w" id="R12" style="left:1705px;top:637px;width:205px;height:205px"><svg viewBox="1705 637 205 205" preserveAspectRatio="none">
<defs><g id="r12s"><path d="M15 0 H178.700 L195 7 H0 Z" fill="#a86647"/><path d="M22 1 H60 L50 5.500 H8 Z M110 1 H170 L182 5.500 H112 Z" fill="#b9744f" opacity=".7"/><path d="M0 7 H195 L193 8.300 H2 Z" fill="#6b3d2b"/></g></defs>
<rect x="1705" y="637" width="205" height="205" fill="#f7f7f7"/>
<use href="#r12s" x="1710" y="699.5"/><use href="#r12s" x="1710" y="741"/><use href="#r12s" x="1707" y="781.3"/>
</svg></div>
<!--R13--><div class="t ckf2" id="R13" style="left:1001px;top:871.5px;width:205.25px;height:170px"><svg viewBox="1001 871.5 205.25 170" preserveAspectRatio="none">
<rect x="1040" y="918" width="128" height="100" fill="#f3f3f3" style="filter:blur(6px)"/>
<rect x="1046" y="922" width="116" height="92" fill="#fbfbfb" style="filter:blur(3px)"/>
<g fill="#9a9a9a" opacity=".35" style="filter:blur(2px)"><rect x="1040" y="923" width="130" height="4"/><rect x="1040" y="969" width="130" height="4"/><rect x="1040" y="1015" width="130" height="4"/></g>
<path d="M1029.5 916.5 H1178.700 L1175 922.500 H1033 Z" fill="#d8a274"/><path d="M1029.500 916.500 H1178.700 L1178 918 H1030 Z" fill="#e7b98e"/>
<path d="M1030 962.500 H1178.500 L1176 968.500 H1032.500 Z" fill="#d8a274"/><path d="M1030 962.500 H1178.500 L1178 964 H1030.500 Z" fill="#e7b98e"/>
<path d="M1040 1002 H1168 L1178.500 1011.500 V1014.500 H1031 V1011.500 Z" fill="#d9a579"/><path d="M1031 1011.500 H1178.500 V1014.500 H1031 Z" fill="#c48d5f"/>
</svg></div>
<!--R14--><div class="t w" id="R14" style="left:1235.5px;top:890.25px;width:205.75px;height:150px"><svg viewBox="1235.5 890.25 205.75 150" preserveAspectRatio="none">
<defs><linearGradient id="r14g" x1="0" y1="0" x2="1" y2="0"><stop offset="0" stop-color="#8d7a12"/><stop offset=".4" stop-color="#c0aa32"/><stop offset="1" stop-color="#927e14"/></linearGradient></defs>
<rect x="1235.5" y="890.25" width="205.750" height="150" fill="#f6f6f6"/>
<g fill="#8c8c88" opacity=".5" style="filter:blur(2.500px)"><rect x="1260" y="942" width="154" height="8.500"/><rect x="1260" y="974" width="154" height="8.500"/><rect x="1260" y="1006.500" width="154" height="8.500"/></g>
<rect x="1247.500" y="900.300" width="9.500" height="128" rx="1.500" fill="url(#r14g)"/><rect x="1419.500" y="900.300" width="9.700" height="128" rx="1.500" fill="url(#r14g)"/>
<g fill="#a8921c"><rect x="1246.500" y="937.300" width="183.500" height="4.200" rx="2"/><rect x="1246.500" y="969.300" width="183.500" height="4.200" rx="2"/><rect x="1246.500" y="1001.400" width="183.500" height="4.200" rx="2"/></g>
<g fill="#c4ae38"><rect x="1248" y="937.600" width="180" height="1.200"/><rect x="1248" y="969.600" width="180" height="1.200"/><rect x="1248" y="1001.700" width="180" height="1.200"/></g>
</svg></div>
<!--R15--><div class="t w" id="R15" style="left:1470px;top:928.75px;width:205.5px;height:71.5px"><svg viewBox="1470 928.75 205.5 71.5" preserveAspectRatio="none">
<defs><linearGradient id="r15g" x1="0" y1="0" x2="1" y2="0"><stop offset="0" stop-color="#b98a2c"/><stop offset=".5" stop-color="#cfa340"/><stop offset="1" stop-color="#b98a2c"/></linearGradient></defs>
<rect x="1470" y="928.750" width="205.500" height="71.500" fill="#f7f7f7"/>
<path d="M1482 978 H1668 L1660 990 H1486 Z" fill="#a9a5b8" opacity=".35" style="filter:blur(3px)"/>
<path d="M1499.500 940 V962 M1646.500 940 V962" stroke="#dedad2" stroke-width="1"/>
<path d="M1498 940.500 L1476 973.500 M1647.500 940.500 L1670.500 973.500" stroke="#a8966b" stroke-width="1.500"/>
<circle cx="1498" cy="940.500" r="1.300" fill="#8e8e8e"/><circle cx="1647.500" cy="940.500" r="1.300" fill="#8e8e8e"/>
<path d="M1493.700 962 H1652.500 L1672.500 974 H1473.300 Z" fill="url(#r15g)"/>
<path d="M1473.300 974 H1672.500 L1671 977 H1475 Z" fill="#8c641a"/>
</svg></div>
<!--R16--><div class="t w" id="R16" style="left:1705px;top:887.75px;width:205px;height:150px"><svg viewBox="1705 887.75 205 150" preserveAspectRatio="none">
<rect x="1705" y="887.750" width="205" height="150" fill="#f7f7f7"/>
<path d="M1775.300 915.700 H1839.800 V1017.500 L1832.600 1022.300 L1775.300 1015.700 Z" fill="#f0d6a3"/>
<path d="M1832.600 920 L1839.800 915.700 V1017.500 L1832.600 1022.300 Z" fill="#ecd09a"/>
<path d="M1777 920 H1831.500 V1018.300 L1777 1012.800 Z" fill="#cd9d64"/>
<path d="M1777 920 H1784 V1007.500 L1777 1012.800 Z" fill="#d9ae76"/>
<path d="M1777 1012.800 L1784 1007.500 H1831.500 V1018.300 Z" fill="#dcb57f"/>
<g fill="#f0d6a3"><path d="M1777 941.400 L1831.500 943.600 V946.200 L1777 943.800 Z"/><path d="M1777 965.100 L1831.500 967.800 V970.600 L1777 967.700 Z"/><path d="M1777 988.800 L1831.500 992.500 V995.700 L1777 991.700 Z"/></g>
<g fill="#ddb680"><path d="M1777 941.400 L1784 938.500 H1831.500 V943.600 Z"/><path d="M1777 965.100 L1784 961.500 H1831.500 V967.800 Z"/><path d="M1777 988.800 L1784 984.500 H1831.500 V992.500 Z"/></g>
<g fill="#b98a54" opacity=".35"><path d="M1777 943.800 L1831.500 946.200 V949 L1777 946 Z"/><path d="M1777 967.700 L1831.500 970.600 V973.500 L1777 970 Z"/><path d="M1777 991.700 L1831.500 995.700 V998.500 L1777 994 Z"/></g>
</svg></div>
</body>
</html>
